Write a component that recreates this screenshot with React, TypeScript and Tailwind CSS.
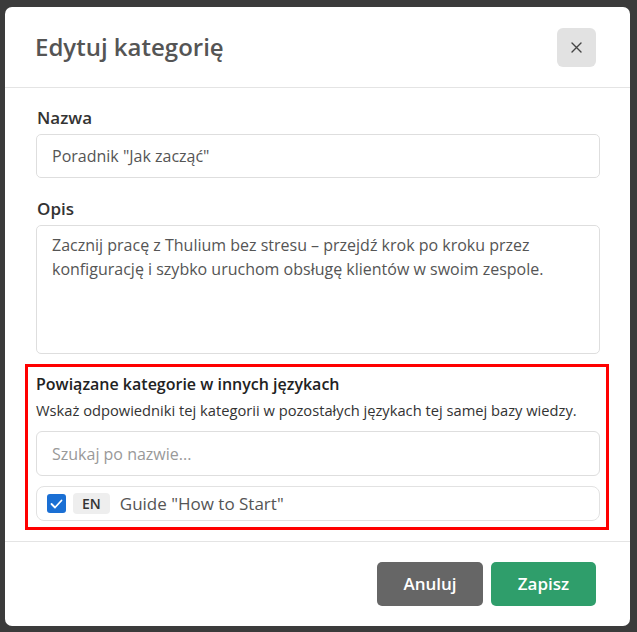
import React from 'react'

function CloseIcon() {
    return (
        <svg width="11" height="11" viewBox="0 0 11 11" fill="none" stroke="#444" strokeWidth="1.4" strokeLinecap="round">
            <path d="M1 1 L10 10 M10 1 L1 10" />
        </svg>
    )
}

function CheckIcon() {
    return (
        <svg width="13" height="10" viewBox="0 0 13 10" fill="none" stroke="#fff" strokeWidth="1.8" strokeLinecap="round" strokeLinejoin="round">
            <path d="M1.5 5 L5 8.5 L11.5 1.5" />
        </svg>
    )
}

export default function App() {
    return (
        <div
            className="w-full h-[632px] bg-[#3b3b3b] pt-[7px] pl-[5px] pr-[7px] pb-[6px]"
            style={{ fontFamily: '"Open Sans", "Noto Sans", sans-serif' }}
        >
            <div className="h-full bg-white rounded-[7px] flex flex-col overflow-hidden">
                {/* Nagłówek */}
                <div className="h-[80px] flex items-center justify-between pl-[30px] pr-[34px] border-b border-[#e4e4e4] shrink-0 box-content">
                    <h2 className="text-[24px] font-semibold text-[#555]">Edytuj kategorię</h2>
                    <button className="w-[39px] h-[39px] rounded-[6px] bg-[#e2e2e2] flex items-center justify-center">
                        <CloseIcon />
                    </button>
                </div>

                {/* Treść formularza */}
                <div className="h-[453px] pt-[18px] pl-[31px] pr-[30px] pb-[10px] flex flex-col shrink-0">
                    <label className="text-[17px] leading-[24px] font-semibold text-[#333] pl-[1px]">Nazwa</label>
                    <div className="mt-[4px] h-[44px] border border-[#dedede] rounded-[5px] flex items-center px-[15px] text-[16px] text-[#555]">
                        Poradnik "Jak zacząć"
                    </div>

                    <label className="mt-[19px] text-[17px] leading-[24px] font-semibold text-[#333] pl-[1px]">Opis</label>
                    <div className="mt-[4px] h-[129px] border border-[#dedede] rounded-[5px] px-[15px] pt-[7px] text-[16px] leading-[24px] text-[#555]">
                        Zacznij pracę z Thulium bez stresu – przejdź krok po kroku przez konfigurację i szybko uruchom obsługę klientów w swoim zespole.
                    </div>

                    {/* Powiązane kategorie */}
                    <div className="mt-[10px] -ml-[11px] -mr-[9px] border-[3px] border-[#ff0000] pl-[8px] pr-[6px] pt-[6px] pb-[6px]">
                        <div className="text-[16px] leading-[22px] font-semibold text-[#222]">
                            Powiązane kategorie w innych językach
                        </div>
                        <div className="mt-[5px] text-[14.7px] leading-[20px] text-[#333]">
                            Wskaż odpowiedniki tej kategorii w pozostałych językach tej samej bazy wiedzy.
                        </div>
                        <div className="mt-[11px] h-[45px] border border-[#dedede] rounded-[6px] flex items-center px-[15px] text-[16px] text-[#999]">
                            Szukaj po nazwie...
                        </div>
                        <div className="mt-[10px] h-[35px] border border-[#e2e2e2] rounded-[8px] flex items-center pl-[10px]">
                            <span className="w-[19px] h-[19px] rounded-[3px] bg-[#1a6fd4] flex items-center justify-center">
                                <CheckIcon />
                            </span>
                            <span className="ml-[7px] h-[21px] px-[9px] rounded-[4px] bg-[#eeeeee] text-[14px] font-semibold text-[#333] flex items-center">
                                EN
                            </span>
                            <span className="ml-[10px] text-[17px] text-[#555]">Guide "How to Start"</span>
                        </div>
                    </div>
                </div>

                {/* Stopka */}
                <div className="flex-1 border-t border-[#e4e4e4] flex items-center justify-end gap-[8px] pr-[34px]">
                    <button className="w-[106px] h-[44px] rounded-[5px] bg-[#666] text-white text-[17px] font-semibold">
                        Anuluj
                    </button>
                    <button className="w-[105px] h-[44px] rounded-[5px] bg-[#2f9e6b] text-white text-[17px] font-semibold">
                        Zapisz
                    </button>
                </div>
            </div>
        </div>
    )
}
